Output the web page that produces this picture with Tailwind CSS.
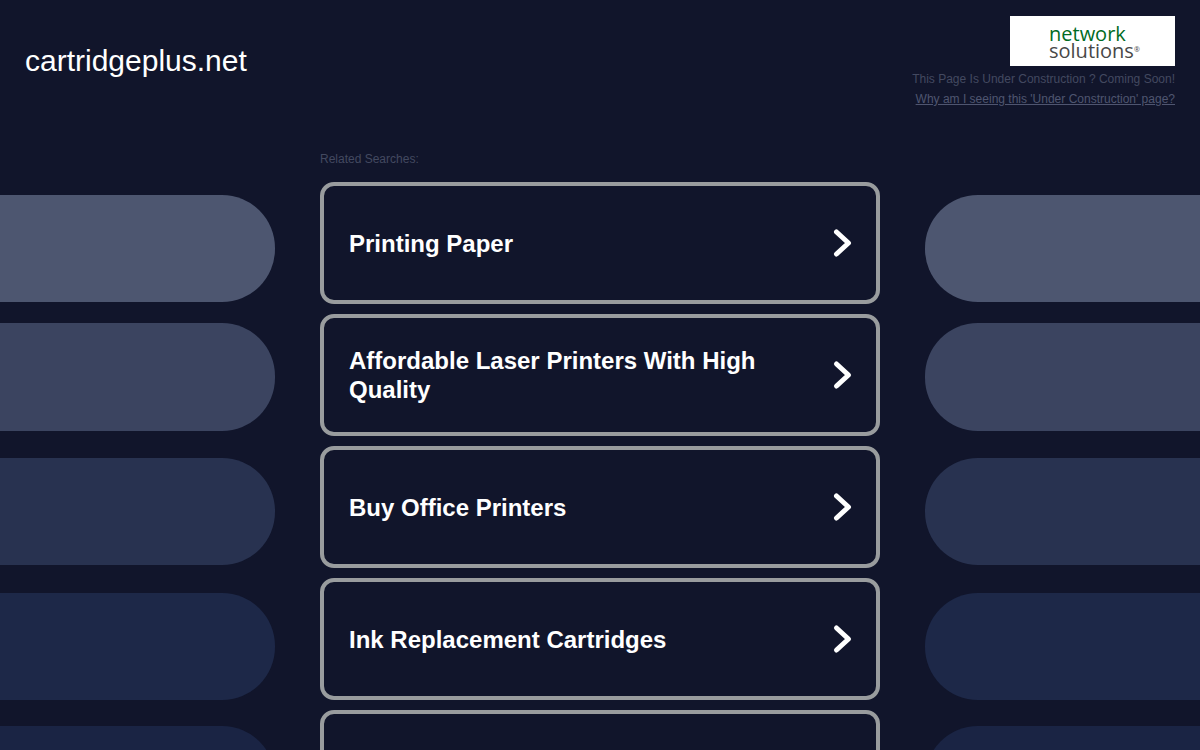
<!DOCTYPE html>
<html lang="en">
<head>
    <meta charset="UTF-8">
    <meta name="viewport" content="width=device-width, initial-scale=1.0">
    <title>cartridgeplus.net</title>
    <script src="https://cdn.jsdelivr.net/npm/@tailwindcss/browser@4"></script>
</head>
<body class="h-[750px] overflow-hidden bg-[#11152b] font-['Liberation_Sans',Arial,sans-serif]">
    <div class="relative h-[750px] overflow-hidden">
        <!-- background pills -->
        <div class="absolute left-[-100px] top-[195px] flex w-[375px] flex-col">
            <div class="h-[107px] rounded-[53px] bg-[#4d5670]"></div>
            <div class="mt-[21px] h-[108px] rounded-[53px] bg-[#3b4460]"></div>
            <div class="mt-[27px] h-[107px] rounded-[53px] bg-[#283250]"></div>
            <div class="mt-[28px] h-[107px] rounded-[53px] bg-[#1d2848]"></div>
            <div class="mt-[26px] h-[107px] rounded-[53px] bg-[#1a2444]"></div>
        </div>
        <div class="absolute left-[925px] top-[195px] flex w-[375px] flex-col">
            <div class="h-[107px] rounded-[53px] bg-[#4d5670]"></div>
            <div class="mt-[21px] h-[108px] rounded-[53px] bg-[#3b4460]"></div>
            <div class="mt-[27px] h-[107px] rounded-[53px] bg-[#283250]"></div>
            <div class="mt-[28px] h-[107px] rounded-[53px] bg-[#1d2848]"></div>
            <div class="mt-[26px] h-[107px] rounded-[53px] bg-[#1a2444]"></div>
        </div>

        <div class="relative">
            <header class="flex h-[150px] justify-between pl-[25px] pr-[25px] pt-[16px]">
                <h1 class="mt-[27px] text-[30px] leading-[36px] font-normal text-white">cartridgeplus.net</h1>
                <div class="flex flex-col items-end">
                    <div class="flex h-[50px] w-[165px] flex-col items-start bg-white pl-[39px] pt-[9px]">
                        <span class="text-[20px] leading-[17px] font-normal text-[#006b24] font-['Open_Sans',sans-serif]">network</span>
                        <span class="flex items-start text-[20px] leading-[17px] font-normal text-[#484848] font-['Open_Sans',sans-serif]">solutions<span class="text-[7px] leading-[16px]">®</span></span>
                    </div>
                    <p class="mt-[6px] text-[12px] leading-[14px] text-[#434960]">This Page Is Under Construction ? Coming Soon!</p>
                    <a href="#" class="mt-[6px] text-[12px] leading-[14px] text-[#4f5570] underline">Why am I seeing this 'Under Construction' page?</a>
                </div>
            </header>

            <main class="mx-auto w-[560px]">
                <p class="text-[12px] leading-[18px] text-[#434960]">Related Searches:</p>
                <div class="mt-[14px] flex flex-col gap-[10px]">
                    <a href="#" class="flex h-[122px] items-center justify-between rounded-[14px] border-[4px] border-[#999c9e] bg-[#11152b] pl-[25px] pr-[22px] text-[24px] leading-[29px] font-bold text-white">
                        <span class="w-[440px]">Printing Paper</span>
                        <svg class="h-[30px] w-[22px]" viewBox="0 0 22 30" fill="none" stroke="currentColor" stroke-width="5" stroke-linecap="round" stroke-linejoin="round"><path d="M4.500 4l12 11l-12 11"/></svg>
                    </a>
                    <a href="#" class="flex h-[122px] items-center justify-between rounded-[14px] border-[4px] border-[#999c9e] bg-[#11152b] pl-[25px] pr-[22px] text-[24px] leading-[29px] font-bold text-white">
                        <span class="w-[440px]">Affordable Laser Printers With High Quality</span>
                        <svg class="h-[30px] w-[22px]" viewBox="0 0 22 30" fill="none" stroke="currentColor" stroke-width="5" stroke-linecap="round" stroke-linejoin="round"><path d="M4.500 4l12 11l-12 11"/></svg>
                    </a>
                    <a href="#" class="flex h-[122px] items-center justify-between rounded-[14px] border-[4px] border-[#999c9e] bg-[#11152b] pl-[25px] pr-[22px] text-[24px] leading-[29px] font-bold text-white">
                        <span class="w-[440px]">Buy Office Printers</span>
                        <svg class="h-[30px] w-[22px]" viewBox="0 0 22 30" fill="none" stroke="currentColor" stroke-width="5" stroke-linecap="round" stroke-linejoin="round"><path d="M4.500 4l12 11l-12 11"/></svg>
                    </a>
                    <a href="#" class="flex h-[122px] items-center justify-between rounded-[14px] border-[4px] border-[#999c9e] bg-[#11152b] pl-[25px] pr-[22px] text-[24px] leading-[29px] font-bold text-white">
                        <span class="w-[440px]">Ink Replacement Cartridges</span>
                        <svg class="h-[30px] w-[22px]" viewBox="0 0 22 30" fill="none" stroke="currentColor" stroke-width="5" stroke-linecap="round" stroke-linejoin="round"><path d="M4.500 4l12 11l-12 11"/></svg>
                    </a>
                    <a href="#" class="flex h-[122px] items-center justify-between rounded-[14px] border-[4px] border-[#999c9e] bg-[#11152b] pl-[25px] pr-[22px] text-[24px] leading-[29px] font-bold text-white">
                        <span class="w-[440px]"></span>
                    </a>
                </div>
            </main>
        </div>
    </div>
</body>
</html>
